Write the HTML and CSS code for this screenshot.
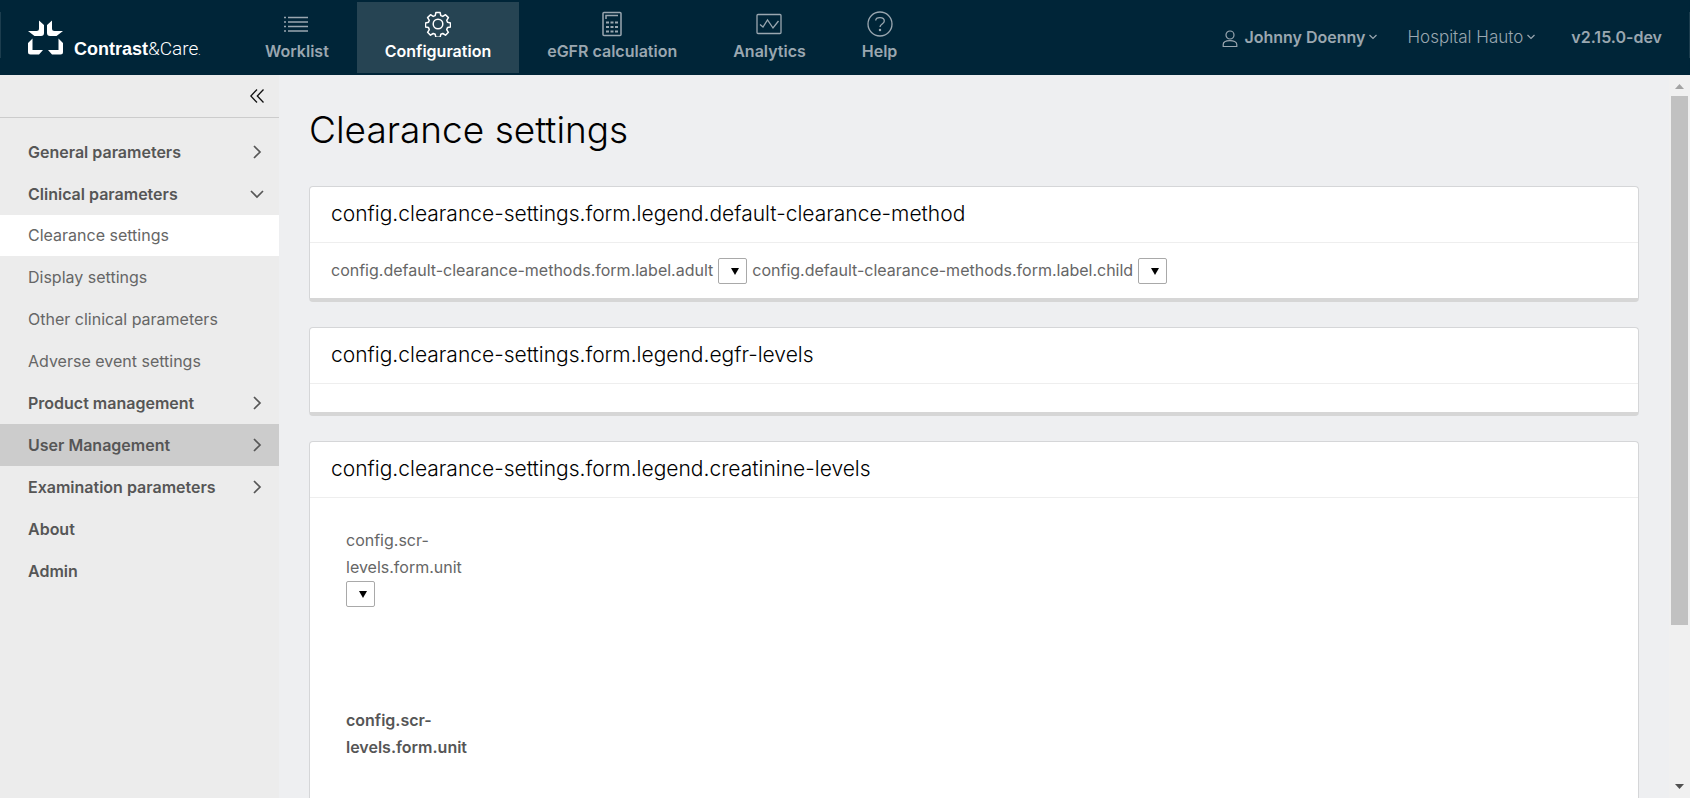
FILE: index.html
```html
<!DOCTYPE html>
<html lang="en">
<head>
<meta charset="utf-8">
<title>Contrast&amp;Care - Clearance settings</title>
<link rel="stylesheet" href="styles.css">
</head>
<body>
<header class="topbar">
  <a class="brand" href="#">
    <svg class="brand-mark" width="36" height="36" viewBox="0 0 36 36" fill="#fff" aria-hidden="true">
      <path d="M11 1.500 L16 6 V14 Q16 17 13 17 H6.500 L0 12 H8.500 Q11 12 11 9.500 Z"/>
      <path d="M24 1.500 L19 6 V14 Q19 17 22 17 H28.500 L35 12 H26.500 Q24 12 24 9.500 Z"/>
      <path d="M0 24 L4.500 19.500 V31 H15 L11 35.500 H2.500 Q0 35.500 0 33 Z"/>
      <path d="M35 24 L30.500 19.500 V31 H20 L24 35.500 H32.500 Q35 35.500 35 33 Z"/>
    </svg>
    <span class="brand-name"><b>Contrast</b>&amp;Care<small>.</small></span>
  </a>
  <nav class="mainnav">
    <a class="nav-item" href="#">
      <svg class="nav-icon" viewBox="0 0 26 26" fill="none" stroke="currentColor" stroke-width="1.300"><path d="M4 6.500H24M4 11H24M4 15.500H24M4 20H24M0 6.500h2M0 11h2M0 15.500h2M0 20h2"/></svg>
      Worklist
    </a>
    <a class="nav-item active" href="#">
      <svg class="nav-icon" viewBox="0 0 26 26" fill="none" stroke="currentColor" stroke-width="1.500" stroke-linejoin="round"><circle cx="13" cy="13" r="4.800"/><path d="M10.900 1.500h4.200l.7 3.100 2 .8 2.700-1.700 2.900 2.900-1.700 2.700.8 2 3 .7v3.900l-3 .7-.8 2 1.700 2.700-2.900 2.900-2.700-1.700-2 .8-.7 3h-4.200l-.7-3-2-.8-2.700 1.700-2.900-2.900 1.700-2.700-.8-2-3-.7v-3.900l3-.7.8-2-1.700-2.700 2.900-2.900 2.700 1.700 2-.8z"/></svg>
      Configuration
    </a>
    <a class="nav-item" href="#">
      <svg class="nav-icon" viewBox="0 0 26 26" fill="none" stroke="currentColor" stroke-width="1.500"><rect x="4" y="1.500" width="18" height="23" rx="1"/><path d="M7 8V4.500h12"/><path stroke-width="2" d="M7 11.500h3M11.500 11.500h3M16 11.500h3M7 16h3M11.500 16h3M16 16h3M7 20.500h3M11.500 20.500h3M16 20.500h3"/></svg>
      eGFR calculation
    </a>
    <a class="nav-item" href="#">
      <svg class="nav-icon" viewBox="0 0 26 26" fill="none" stroke="currentColor" stroke-width="1.300"><rect x="1" y="3.500" width="24" height="19" rx="1"/><path d="M4 13.500l3 2.500 4.500-7 5.500 8 5.500-7"/></svg>
      Analytics
    </a>
    <a class="nav-item" href="#">
      <svg class="nav-icon" viewBox="0 0 26 26" fill="none" stroke="currentColor" stroke-width="1.300"><circle cx="13" cy="13" r="12"/><path d="M8.700 9.500C9 5.700 17.200 5.700 17.300 10c0 3-4.300 3-4.300 6"/><circle cx="13" cy="19" r=".6" fill="currentColor"/></svg>
      Help
    </a>
  </nav>
  <div class="account">
    <button class="menu user" type="button">
      <svg class="person" width="16" height="18" viewBox="0 0 16 18" fill="none" stroke="currentColor" stroke-width="1.200"><circle cx="8" cy="5" r="4"/><path d="M1.200 16.500v-2c0-5.300 13.600-5.300 13.600 0v2z"/></svg>
      Johnny Doenny
      <svg class="caret" width="8" height="6" viewBox="0 0 8 6" fill="none" stroke="currentColor" stroke-width="1.200"><path d="M.5 1 4 4.500 7.500 1"/></svg>
    </button>
    <button class="menu" type="button">
      Hospital Hauto
      <svg class="caret" width="8" height="6" viewBox="0 0 8 6" fill="none" stroke="currentColor" stroke-width="1.200"><path d="M.5 1 4 4.500 7.500 1"/></svg>
    </button>
    <span class="version">v2.15.0-dev</span>
  </div>
</header>
<div class="shell">
  <aside class="sidebar">
    <div class="collapse-row">
      <button class="collapse" type="button" aria-label="Collapse menu">
        <svg width="14" height="14" viewBox="0 0 14 14" fill="none" stroke="#111" stroke-width="1.300"><path d="M7 .5.8 7 7 13.500M13.500.5 7.300 7l6.200 6.500"/></svg>
      </button>
    </div>
    <nav class="tree">
      <a class="group" href="#">General parameters<svg class="chev" viewBox="0 0 14 14"><path d="M4 1l6 6-6 6"/></svg></a>
      <a class="group" href="#">Clinical parameters<svg class="chev" viewBox="0 0 14 14"><path d="M1 4l6 6 6-6"/></svg></a>
      <a class="leaf selected" href="#">Clearance settings</a>
      <a class="leaf" href="#">Display settings</a>
      <a class="leaf" href="#">Other clinical parameters</a>
      <a class="leaf" href="#">Adverse event settings</a>
      <a class="group" href="#">Product management<svg class="chev" viewBox="0 0 14 14"><path d="M4 1l6 6-6 6"/></svg></a>
      <a class="group hovered" href="#">User Management<svg class="chev" viewBox="0 0 14 14"><path d="M4 1l6 6-6 6"/></svg></a>
      <a class="group" href="#">Examination parameters<svg class="chev" viewBox="0 0 14 14"><path d="M4 1l6 6-6 6"/></svg></a>
      <a class="group" href="#">About</a>
      <a class="group" href="#">Admin</a>
    </nav>
  </aside>
  <main class="content">
    <h1 class="title">Clearance settings</h1>
    <section class="card">
      <h2 class="card-head">config.clearance-settings.form.legend.default-clearance-method</h2>
      <div class="card-body fields">
        <label for="adult">config.default-clearance-methods.form.label.adult</label>
        <select class="pick" id="adult"></select>
        <label for="child">config.default-clearance-methods.form.label.child</label>
        <select class="pick" id="child"></select>
      </div>
    </section>
    <section class="card">
      <h2 class="card-head">config.clearance-settings.form.legend.egfr-levels</h2>
      <div class="card-body"></div>
    </section>
    <section class="card">
      <h2 class="card-head">config.clearance-settings.form.legend.creatinine-levels</h2>
      <div class="card-body levels">
        <div class="unit">
          <label for="unit">config.scr-levels.form.unit</label>
          <select class="pick" id="unit"></select>
        </div>
        <div class="unit strong">config.scr-levels.form.unit</div>
      </div>
    </section>
  </main>
  <div class="scrollbar" aria-hidden="true">
    <svg class="arrow" viewBox="0 0 9 5"><path fill="#a3a3a3" d="M0 5 4.500 0 9 5z"/></svg>
    <div class="thumb"></div>
    <svg class="arrow" viewBox="0 0 9 5"><path fill="#505050" d="M0 0 4.500 5 9 0z"/></svg>
  </div>
</div>
</body>
</html>
```
FILE: styles.css
```css
* { box-sizing: border-box; }

body {
  margin: 0;
  height: 100vh;
  display: flex;
  flex-direction: column;
  overflow: hidden;
  font: 400 16px/27px Inter, "Open Sans", sans-serif;
  color: #565656;
  background: #eeeff1;
}

a { color: inherit; text-decoration: none; }
button { font: inherit; color: inherit; background: none; border: 0; padding: 0; }

.topbar {
  flex: none;
  display: flex;
  height: 75px;
  background: #002538;
  color: #9aa7b0;
}
.topbar::before, .topbar::after {
  content: "";
  width: 1px;
  height: 46px;
  margin-top: 12px;
  background: #1c3d4e;
}

.brand { display: flex; width: 236px; padding: 19px 0 0 27px; color: #fff; gap: 10px; }
.brand-name { font: 300 19px/20px Roboto, sans-serif; padding-top: 20px; }
.brand-name b { font: 700 18px/20px "Liberation Sans", sans-serif; }
.brand-name small { font-size: 10px; }

.mainnav { display: flex; padding: 2px 0; }
.nav-item {
  display: flex;
  flex-direction: column;
  align-items: center;
  padding: 9px 28px 0;
  font-weight: 600;
  line-height: 24px;
  white-space: nowrap;
}
.nav-item.active { background: #264453; color: #fff; }
.nav-icon { width: 26px; height: 26px; margin-bottom: 2px; }

.account { display: flex; margin-left: auto; align-items: center; height: 74px; gap: 30px; padding-right: 27px; white-space: nowrap; }
.menu { display: flex; align-items: center; gap: 4px; font-size: 17px; font-weight: 300; }
.user { font-size: 16px; font-weight: 600; }
.person { margin: 3px 2px 0 0; }
.version { margin-left: 6px; font-weight: 600; }

.shell { flex: 1; display: flex; min-height: 0; }

.sidebar { flex: none; width: 279px; background: #ececec; }
.collapse-row { display: flex; justify-content: flex-end; align-items: center; height: 43px; padding-right: 15px; border-bottom: 1px solid #ccc; }
.collapse { display: flex; }
.tree { padding-top: 13px; }
.group, .leaf { display: flex; align-items: center; justify-content: space-between; height: 42px; padding: 0 15px 0 28px; white-space: nowrap; }
.group { font-weight: 600; }
.leaf { color: #666; }
.leaf.selected { height: 41px; background: #fff; }
.hovered { background: #ccc; }
.chev { width: 14px; height: 14px; fill: none; stroke: #565656; stroke-width: 1.700; }

.content { flex: 1; min-width: 0; padding: 35px 30px 0; overflow: hidden; }
.title { margin: 0 0 36px; font-size: 37px; line-height: 40px; font-weight: 300; color: #000; }

.card { margin-bottom: 25px; background: #fff; border: 1px solid #d5d6d8; border-bottom: 4px solid #d6d6d6; border-radius: 4px; }
.card-head { margin: 0; padding: 13px 21px 14px; border-bottom: 1px solid #eee; font-size: 21px; line-height: 28px; font-weight: 300; color: #000; }
.card-body { padding: 14px 21px; color: #666; }
.fields { display: flex; align-items: center; gap: 5px; white-space: nowrap; }
.levels { padding: 29px 36px; }
.unit { display: flex; flex-direction: column; align-items: flex-start; width: 130px; height: 180px; }
.strong { font-weight: 600; color: #565656; }

.pick {
  appearance: none;
  width: 29px;
  height: 26px;
  border: 1px solid #a9a9a9;
  border-radius: 2px;
  background: #fff url("data:image/svg+xml,%3Csvg xmlns='http://www.w3.org/2000/svg' width='8' height='7'%3E%3Cpath d='M0 0h8L4 7z'/%3E%3C/svg%3E") 12px 9px no-repeat;
}

.scrollbar { flex: none; display: flex; flex-direction: column; align-items: center; width: 21px; padding: 9px 0; background: #f0f0f0; }
.arrow { width: 9px; height: 5px; }
.thumb { width: 17px; height: 75%; margin: 7px 0 auto; background: #c1c1c1; }
```
